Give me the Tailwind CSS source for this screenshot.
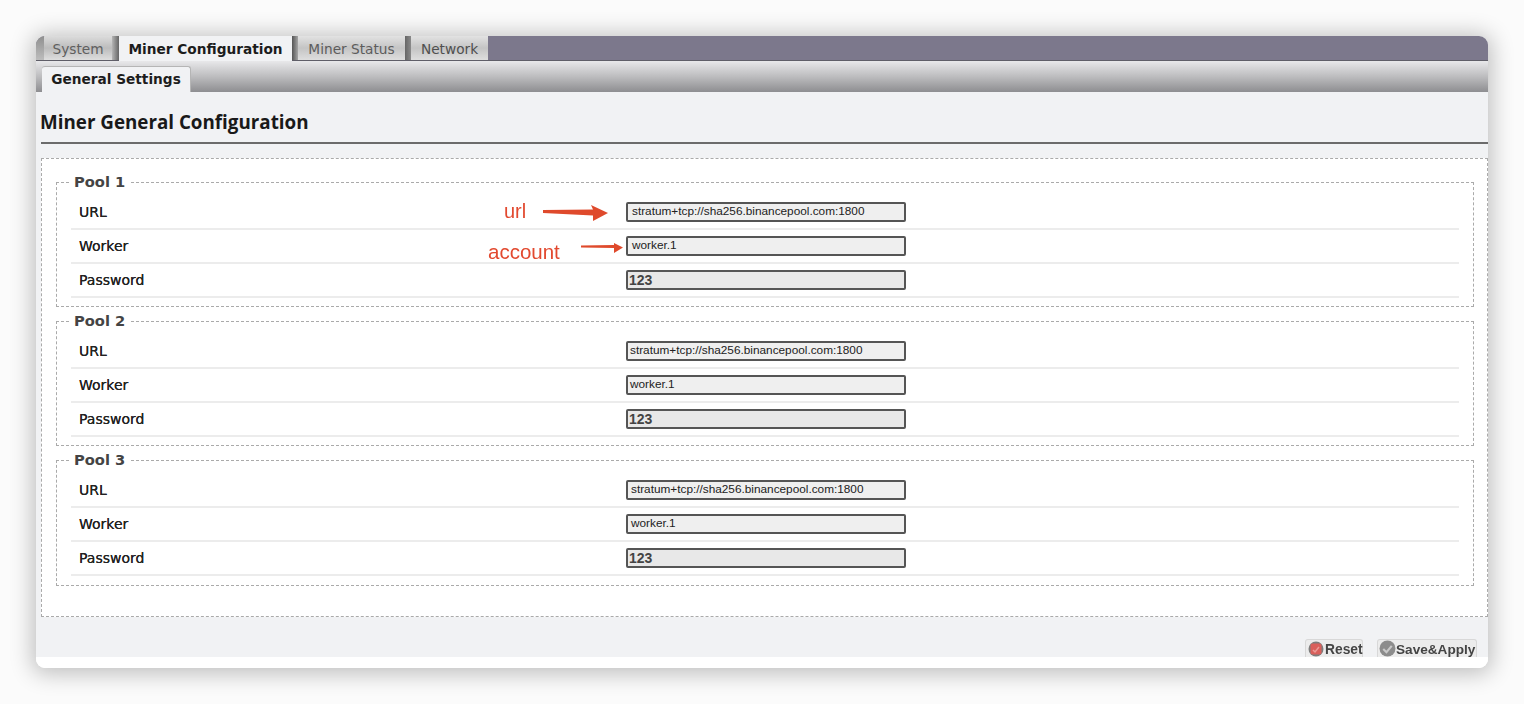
<!DOCTYPE html>
<html lang="en">
<head>
    <meta charset="UTF-8">
    <title>Miner General Configuration</title>
    <script src="https://cdn.jsdelivr.net/npm/@tailwindcss/browser@4"></script>
</head>
<body class="bg-[#fbfbfb] h-[704px] w-[1524px] overflow-hidden font-['DejaVu_Sans',sans-serif]">
    <main class="ml-[36px] mt-[36px] w-[1452px] h-[632px] rounded-[9px] bg-white overflow-hidden flex flex-col shadow-[0_2px_22px_4px_rgba(0,0,0,0.24)] relative blur-[0.55px]">
        <!-- top tabs -->
        <nav class="h-[25px] bg-[#7c788c] flex items-end text-[13.7px] shrink-0 border-b border-[#5f5e68]">
            <div class="h-[24px] w-[8px] bg-gradient-to-b from-[#8f8f8f] to-[#bdbdbd]"></div>
            <a class="h-[24px] w-[68px] pt-[2px] flex items-center justify-center text-[#5f5f5f] bg-gradient-to-b from-[#dcdcdc] via-[#bcbcbc] to-[#dedede]">System</a>
            <div class="h-[24px] w-[7px] bg-gradient-to-r from-[#b5b5b5] to-[#666]"></div>
            <a class="h-[25px] w-[173px] pt-px flex items-center justify-center font-bold text-[#1c1c1c] bg-[#f1f2f4] -mb-px">Miner Configuration</a>
            <div class="h-[24px] w-[6px] bg-gradient-to-r from-[#555] to-[#a5a5a5]"></div>
            <a class="h-[24px] w-[107px] pt-[2px] flex items-center justify-center text-[#5c5c5c] bg-gradient-to-b from-[#e2e2e2] via-[#c4c4c4] to-[#dedede]">Miner Status</a>
            <div class="h-[24px] w-[6px] bg-gradient-to-r from-[#666] to-[#8a8a8a]"></div>
            <a class="h-[24px] w-[77px] pt-[2px] flex items-center justify-center text-[#4f4f4f] bg-gradient-to-b from-[#e2e2e2] via-[#c4c4c4] to-[#dedede]">Network</a>
        </nav>
        <!-- sub tabs -->
        <div class="h-[31px] bg-gradient-to-b from-[#e8e8ea] via-[#bdbdbf] to-[#8e8e91] flex items-end pl-[6px] shrink-0">
            <a class="h-[26px] w-[149px] flex items-center justify-center font-bold text-[13.7px] text-[#1d1d1d] bg-[#f1f2f4] rounded-t-[3px] border-t border-r border-[#b5b5b5]">General Settings</a>
        </div>

        <div class="flex-1 bg-[#f1f2f4] flex flex-col">
            <h1 class="ml-[4px] mt-[16px] h-[28px] leading-[28px] text-[18.8px] font-bold font-['Open_Sans',sans-serif] text-[#191919]">Miner General Configuration</h1>
            <div class="ml-[5px] mt-[6px] h-[2px] bg-[#6b6b6b]"></div>

            <section class="ml-[5px] mt-[14px] h-[459px] bg-white border border-dashed border-[#aaa] pl-[14px] pr-[13px] pt-[12px]">
                <fieldset class="h-[136px] border border-dashed border-[#aaa] px-[14px] pb-0">
                    <legend class="-ml-[1px] px-[4px] text-[14.7px] font-bold text-[#444]">Pool 1</legend>
                    <div class="pt-[3px]">
                        <div class="h-[34px] flex items-center border-b-2 border-[#ececec]"><label class="w-[555px] pl-[8px] text-[14px] text-[#222] [text-shadow:0_0_0.6px_#222]">URL</label><div class="h-[20px] w-[280px] bg-[#efefef] border-2 border-[#555] rounded-[2px] flex items-center pl-[4px] text-[11.8px] font-['Liberation_Sans',sans-serif] text-[#222]">stratum+tcp://sha256.binancepool.com:1800</div></div>
                        <div class="h-[34px] flex items-center border-b-2 border-[#ececec]"><label class="w-[555px] pl-[8px] text-[14px] text-[#222] [text-shadow:0_0_0.6px_#222]">Worker</label><div class="h-[20px] w-[280px] bg-[#efefef] border-2 border-[#555] rounded-[2px] flex items-center pl-[4px] text-[11.8px] font-['Liberation_Sans',sans-serif] text-[#222]">worker.1</div></div>
                        <div class="h-[34px] flex items-center border-b-2 border-[#ececec]"><label class="w-[555px] pl-[8px] text-[14px] text-[#222] [text-shadow:0_0_0.6px_#222]">Password</label><div class="h-[20px] w-[280px] bg-[#e8e8e8] border-2 border-[#555] rounded-[2px] flex items-center pl-[1px] text-[14px] font-bold font-['Liberation_Sans',sans-serif] text-[#444]">123</div></div>
                    </div>
                </fieldset>
                <fieldset class="mt-[3px] h-[136px] border border-dashed border-[#aaa] px-[14px]">
                    <legend class="-ml-[1px] px-[4px] text-[14.7px] font-bold text-[#444]">Pool 2</legend>
                    <div class="pt-[3px]">
                        <div class="h-[34px] flex items-center border-b-2 border-[#ececec]"><label class="w-[555px] pl-[8px] text-[14px] text-[#222] [text-shadow:0_0_0.6px_#222]">URL</label><div class="h-[20px] w-[280px] bg-[#efefef] border-2 border-[#555] rounded-[2px] flex items-center pl-[2px] text-[11.8px] font-['Liberation_Sans',sans-serif] text-[#222]">stratum+tcp://sha256.binancepool.com:1800</div></div>
                        <div class="h-[34px] flex items-center border-b-2 border-[#ececec]"><label class="w-[555px] pl-[8px] text-[14px] text-[#222] [text-shadow:0_0_0.6px_#222]">Worker</label><div class="h-[20px] w-[280px] bg-[#efefef] border-2 border-[#555] rounded-[2px] flex items-center pl-[2px] text-[11.8px] font-['Liberation_Sans',sans-serif] text-[#222]">worker.1</div></div>
                        <div class="h-[34px] flex items-center border-b-2 border-[#ececec]"><label class="w-[555px] pl-[8px] text-[14px] text-[#222] [text-shadow:0_0_0.6px_#222]">Password</label><div class="h-[20px] w-[280px] bg-[#e8e8e8] border-2 border-[#555] rounded-[2px] flex items-center pl-[1px] text-[14px] font-bold font-['Liberation_Sans',sans-serif] text-[#444]">123</div></div>
                    </div>
                </fieldset>
                <fieldset class="mt-[3px] h-[137px] border border-dashed border-[#aaa] px-[14px]">
                    <legend class="-ml-[1px] px-[4px] text-[14.7px] font-bold text-[#444]">Pool 3</legend>
                    <div class="pt-[3px]">
                        <div class="h-[34px] flex items-center border-b-2 border-[#ececec]"><label class="w-[555px] pl-[8px] text-[14px] text-[#222] [text-shadow:0_0_0.6px_#222]">URL</label><div class="h-[20px] w-[280px] bg-[#efefef] border-2 border-[#555] rounded-[2px] flex items-center pl-[3px] text-[11.8px] font-['Liberation_Sans',sans-serif] text-[#222]">stratum+tcp://sha256.binancepool.com:1800</div></div>
                        <div class="h-[34px] flex items-center border-b-2 border-[#ececec]"><label class="w-[555px] pl-[8px] text-[14px] text-[#222] [text-shadow:0_0_0.6px_#222]">Worker</label><div class="h-[20px] w-[280px] bg-[#efefef] border-2 border-[#555] rounded-[2px] flex items-center pl-[3px] text-[11.8px] font-['Liberation_Sans',sans-serif] text-[#222]">worker.1</div></div>
                        <div class="h-[34px] flex items-center border-b-2 border-[#ececec]"><label class="w-[555px] pl-[8px] text-[14px] text-[#222] [text-shadow:0_0_0.6px_#222]">Password</label><div class="h-[20px] w-[280px] bg-[#e8e8e8] border-2 border-[#555] rounded-[2px] flex items-center pl-[1px] text-[14px] font-bold font-['Liberation_Sans',sans-serif] text-[#444]">123</div></div>
                    </div>
                </fieldset>
            </section>

            <!-- buttons, the bottom edge is cut off in the picture -->
            <div class="mt-[22px] flex justify-end items-start pr-[11px] gap-[14px] font-['Liberation_Sans',sans-serif] text-[#444]">
                <button class="h-[18px] w-[58px] bg-[#ececec] border border-[#d8d8d8] border-b-0 rounded-t-[3px] flex items-start pt-[1px] pl-[2px]">
                    <svg class="w-[16px] h-[16px] shrink-0" viewBox="0 0 16 16"><circle cx="8" cy="8" r="7.5" fill="#7d7d7d"/><rect x="2.5" y="2.5" width="11" height="11" rx="2" fill="#d9605c"/><path d="M5 9l2 2 4-5" stroke="#ec9a96" stroke-width="1.5" fill="none"/></svg>
                    <span class="text-[13.8px] leading-[16px] font-bold ml-[1px] mt-[1px]">Reset</span>
                </button>
                <button class="h-[18px] w-[100px] bg-[#ececec] border border-[#d8d8d8] border-b-0 rounded-t-[3px] flex items-start pl-[1px]">
                    <svg class="w-[17px] h-[17px] shrink-0" viewBox="0 0 16 16"><circle cx="8" cy="8" r="7.5" fill="#8c8c8c"/><path d="M4 8.5l3 3 5-6" stroke="#c9c9c9" stroke-width="2" fill="none"/></svg>
                    <span class="text-[13.6px] leading-[16px] font-bold mt-[2px]">Save&amp;Apply</span>
                </button>
            </div>
        </div>
        <div class="h-[11px] bg-white shrink-0"></div>

        <!-- red annotations drawn over the form -->
        <span class="absolute left-[468px] top-[163px] text-[20px] leading-[24px] text-[#e2492f] font-['Liberation_Sans',sans-serif]">url</span>
        <span class="absolute left-[452px] top-[204px] text-[20.5px] leading-[24px] text-[#e2492f] font-['Liberation_Sans',sans-serif]">account</span>
        <svg class="absolute left-[505px] top-[165px]" width="70" height="24" viewBox="0 0 70 24"><path d="M2 9L52 8.5 50 4 67 12 52 20 52 14.5 2 12Z" fill="#df4a2c"/></svg>
        <svg class="absolute left-[543px] top-[202px]" width="46" height="18" viewBox="0 0 46 18"><path d="M2 7.5L35 7 35 5 44 9.5 35 15 35 10 2 9.5Z" fill="#df4a2c"/></svg>
    </main>
</body>
</html>
